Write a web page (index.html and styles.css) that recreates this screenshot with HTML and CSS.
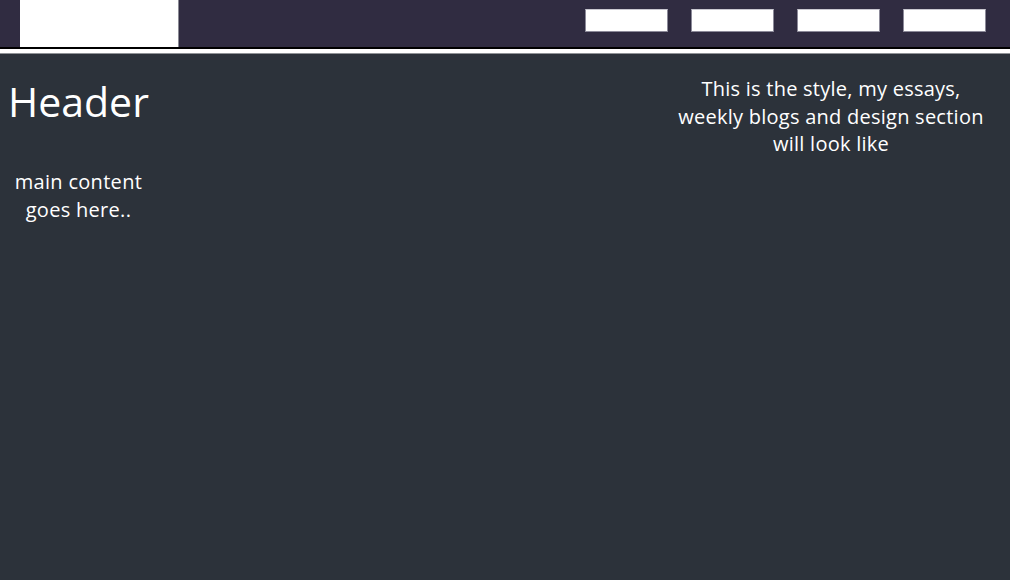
FILE: index.html
```html
<!DOCTYPE html>
<html lang="en">
<head>
<meta charset="utf-8">
<title>Style</title>
<link rel="stylesheet" href="styles.css">
</head>
<body>
<header class="topbar">
  <div class="logo"></div>
  <nav class="nav">
    <a class="nav-item" href="#"></a>
    <a class="nav-item" href="#"></a>
    <a class="nav-item" href="#"></a>
    <a class="nav-item" href="#"></a>
  </nav>
</header>
<div class="divider"></div>
<main class="page">
  <section class="content">
    <h1 class="title">Header</h1>
    <p class="body-text">main content<br>goes here..</p>
  </section>
  <aside class="side">
    <p class="side-text">This is the style, my essays,<br>weekly blogs and design section<br>will look like</p>
  </aside>
</main>
</body>
</html>
```

FILE: styles.css
```css
html, body {
  margin: 0;
  padding: 0;
}
body {
  background: #2c323a;
  color: #ffffff;
  font-family: "Open Sans", "Liberation Sans", sans-serif;
  height: 580px;
  overflow: hidden;
}
.topbar {
  display: flex;
  justify-content: space-between;
  align-items: flex-start;
  height: 47px;
  background: #302c41;
  border-bottom: 2px solid #000000;
  padding: 0 24px 0 20px;
}
.logo {
  width: 158px;
  height: 47px;
  background: #ffffff;
  border-right: 1px solid #8a8a94;
}
.nav {
  display: flex;
  gap: 23px;
  padding-top: 9px;
}
.nav-item {
  display: block;
  box-sizing: content-box;
  width: 81px;
  height: 21px;
  background: #ffffff;
  border: 1px solid #8c8a99;
  border-top-color: #c9c8d0;
}
.divider {
  height: 4px;
  background: #ffffff;
  border-bottom: 1px solid #8f9296;
}
.page {
  display: flex;
  justify-content: space-between;
  align-items: flex-start;
}
.content {
  padding-left: 8px;
}
.title {
  margin: 22px 0 0;
  font-size: 41px;
  font-weight: 400;
  line-height: 50px;
}
.body-text {
  margin: 42px 0 0;
  text-align: center;
  font-size: 20px;
  font-weight: 500;
  line-height: 28px;
  letter-spacing: 0.3px;
}
.side {
  width: 342px;
  margin-right: 8px;
}
.side-text {
  margin: 21px 0 0;
  text-align: center;
  font-size: 20px;
  font-weight: 500;
  line-height: 27.5px;
  letter-spacing: 0.25px;
}
```
